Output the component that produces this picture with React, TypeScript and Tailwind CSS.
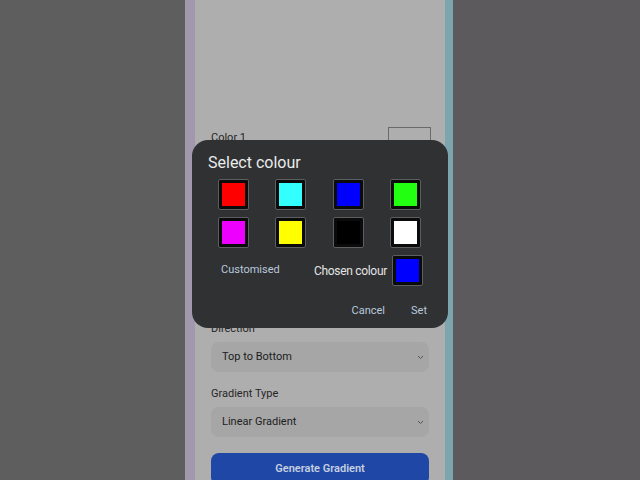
import React from "react";

const palette = [
  ["#ff0000", "#33ffff", "#0000ff", "#22ff11"],
  ["#ee00ff", "#ffff00", "#000000", "#ffffff"],
];

function Swatch({ color }: { color: string }) {
  return (
    <div className="w-[31px] h-[31px] rounded-[2px] border border-[#5c5e60] bg-[#0b0b0b] p-[3px]">
      <div className="w-full h-full" style={{ backgroundColor: color }} />
    </div>
  );
}

function Chevron() {
  return (
    <svg width="7" height="5" viewBox="0 0 7 5" fill="none">
      <path d="M1 1l2.5 2.5L6 1" stroke="#555" strokeWidth="1" />
    </svg>
  );
}

function SelectBox({ value }: { value: string }) {
  return (
    <div className="shrink-0 h-[30px] rounded-[8px] bg-[#a6a6a6] flex items-center justify-between pl-[11px] pr-[5px]">
      <span className="text-[11px] text-[#1d1d1d]">{value}</span>
      <Chevron />
    </div>
  );
}

function ColourDialog() {
  return (
    <div className="absolute left-[192px] top-[140px] w-[256px] h-[188px] rounded-[16px] bg-[#2f3133] flex flex-col">
      <div className="pt-[13px] pl-[16px] text-[16px] leading-[20px] text-[#ebebeb]">Select colour</div>
      <div className="mt-[6px] ml-[26px] w-[203px] flex flex-col gap-[7px]">
        {palette.map((row, r) => (
          <div key={r} className="flex justify-between">
            {row.map((c) => (
              <Swatch key={c} color={c} />
            ))}
          </div>
        ))}
      </div>
      <div className="mt-[7px] flex items-center justify-between pl-[29px] pr-[25px]">
        <span className="text-[11px] text-[#b9c9dc]">Customised</span>
        <div className="flex items-center gap-[5px]">
          <span className="text-[12px] tracking-[-0.3px] text-[#e4e4e4]">Chosen colour</span>
          <Swatch color="#0000ff" />
        </div>
      </div>
      <div className="mt-[17px] flex justify-end gap-[26px] pr-[21px] text-[11px] text-[#b9c9dc]">
        <span>Cancel</span>
        <span>Set</span>
      </div>
    </div>
  );
}

export default function App() {
  return (
    <div className="relative w-[640px] h-[480px] overflow-hidden flex bg-[#5e5e5e] font-['Roboto',sans-serif]">
      <div className="w-[185px]" />
      <div className="w-[10px] bg-[#a397ae]" />
      <div className="w-[250px] bg-[#aeaeae] flex flex-col px-[16px] overflow-hidden">
        {/* preview area */}
        <div className="shrink-0 h-[127px]" />
        <div className="shrink-0 flex justify-between items-start">
          <span className="text-[11px] leading-[16px] text-[#262626] mt-[3px]">Color 1</span>
          <div className="w-[43px] h-[20px] border border-[#6a6a6a] mr-[-2px]" />
        </div>
        <div className="shrink-0 flex justify-between items-start mt-[20px]">
          <span className="text-[11px] leading-[16px] text-[#262626] mt-[3px]">Color 2</span>
          <div className="w-[43px] h-[20px] border border-[#6a6a6a] mr-[-2px]" />
        </div>
        <div className="shrink-0 h-[135px]" />
        <span className="shrink-0 text-[11px] leading-[13px] text-[#262626]">Direction</span>
        <div className="shrink-0 mt-[7px]">
          <SelectBox value="Top to Bottom" />
        </div>
        <span className="shrink-0 mt-[15px] text-[11px] leading-[13px] text-[#262626]">Gradient Type</span>
        <div className="shrink-0 mt-[7px]">
          <SelectBox value="Linear Gradient" />
        </div>
        <div className="shrink-0 mt-[16px] h-[32px] rounded-[8px] bg-[#1f48a6] flex items-center justify-center text-[11px] font-semibold text-[#c6cfe0]">
          Generate Gradient
        </div>
      </div>
      <div className="w-[8px] bg-[#7ca5b0]" />
      <div className="flex-1 bg-[#5c5a5d]" />
      <ColourDialog />
    </div>
  );
}
